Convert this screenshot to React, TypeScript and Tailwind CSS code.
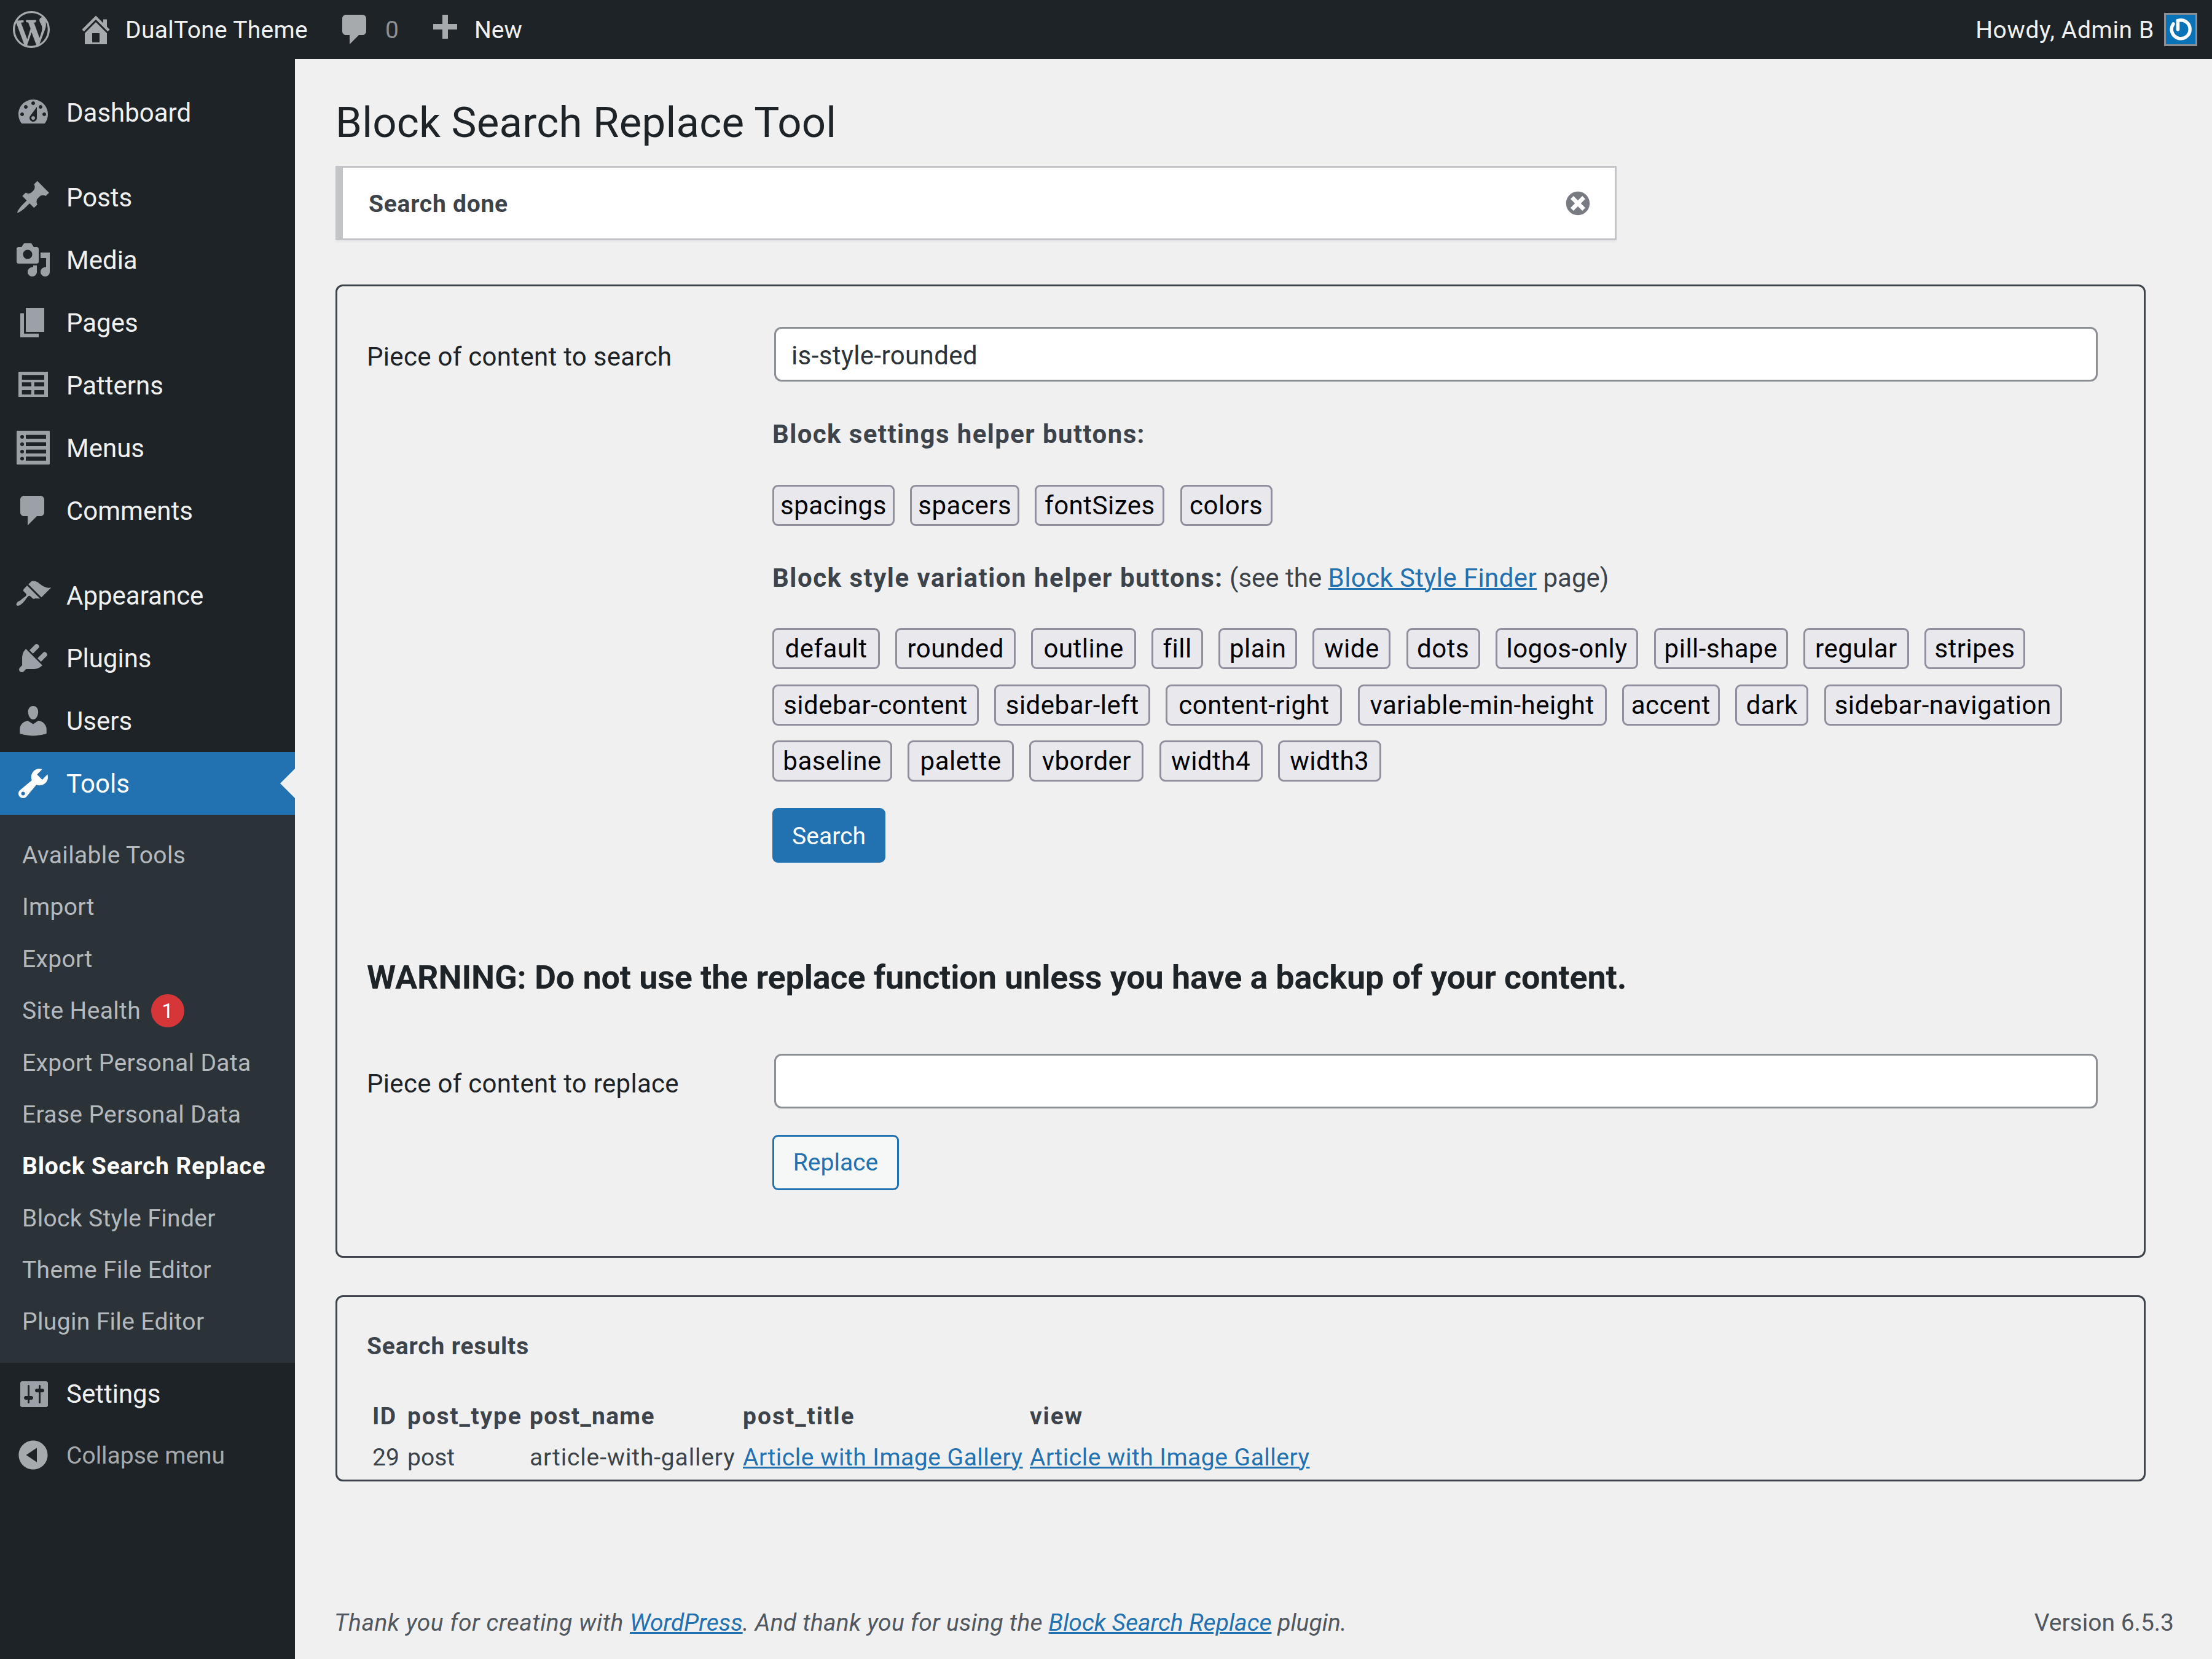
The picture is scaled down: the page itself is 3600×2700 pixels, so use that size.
import React from "react";

const ICONS: Record<string, string> = {
  wp: "M20 10c0-5.51-4.49-10-10-10C4.48 0 0 4.49 0 10c0 5.52 4.48 10 10 10 5.51 0 10-4.48 10-10zM7.78 15.37L4.37 6.22c.55-.02 1.17-.08 1.17-.08.5-.06.44-1.13-.06-1.11 0 0-1.45.11-2.37.11-.18 0-.37 0-.58-.01C4.12 2.69 6.87 1.11 10 1.11c2.33 0 4.45.87 6.05 2.34-.68-.11-1.65.39-1.65 1.58 0 .74.45 1.36.9 2.1.35.61.55 1.36.55 2.46 0 1.49-1.4 5-1.4 5l-3.03-8.37c.54-.02.82-.17.82-.17.5-.05.44-1.25-.06-1.22 0 0-1.44.12-2.38.12-.87 0-2.33-.12-2.33-.12-.5-.03-.56 1.2-.06 1.22l.92.08 1.26 3.41zM17.41 10c.24-.64.74-1.87.43-4.25.7 1.29 1.05 2.71 1.05 4.25 0 3.29-1.73 6.24-4.4 7.78.97-2.59 1.94-5.2 2.92-7.78zM6.1 18.09C3.12 16.65 1.11 13.53 1.11 10c0-1.3.23-2.48.72-3.59C3.25 10.3 4.67 14.2 6.1 18.09zm4.03-6.63l2.58 6.98c-.86.29-1.76.45-2.71.45-.79 0-1.57-.11-2.29-.33.81-2.38 1.62-4.74 2.42-7.1z",
  home: "M16 8.5l1.53 1.53-1.06 1.06L10 4.62l-6.47 6.47-1.06-1.06L10 2.5l4 4v-2h2v4zm-6-2.46l6 5.99V18H4v-5.97zM12 17v-5H8v5h4z",
  comment: "M5 2h9c1.1 0 2 .9 2 2v7c0 1.1-.9 2-2 2h-2l-5 5v-5H5c-1.1 0-2-.9-2-2V4c0-1.1.9-2 2-2z",
  plus: "M17 7v3h-5v5H9v-5H4V7h5V2h3v5h5z",
  dashboard: "M3.76 16h12.48c1.1-1.37 1.76-3.11 1.76-5 0-4.42-3.58-8-8-8s-8 3.58-8 8c0 1.89.66 3.63 1.76 5zM10 4c.55 0 1 .45 1 1s-.45 1-1 1-1-.45-1-1 .45-1 1-1zM6 6c.55 0 1 .45 1 1s-.45 1-1 1-1-.45-1-1 .45-1 1-1zm8 0c.55 0 1 .45 1 1s-.45 1-1 1-1-.45-1-1 .45-1 1-1zm-5.37 5.55L12 7v6c0 1.1-.9 2-2 2s-2-.9-2-2c0-.57.24-1.08.63-1.45zM4 10c.55 0 1 .45 1 1s-.45 1-1 1-1-.45-1-1 .45-1 1-1zm12 0c.55 0 1 .45 1 1s-.45 1-1 1-1-.45-1-1 .45-1 1-1zm-5 3c0-.55-.45-1-1-1s-1 .45-1 1 .45 1 1 1 1-.45 1-1z",
  post: "M10.44 3.02l1.82-1.82 6.36 6.35-1.83 1.82c-1.05-.68-2.48-.57-3.41.36l-.75.75c-.92.93-1.04 2.35-.35 3.41l-1.83 1.82-2.41-2.41-2.8 2.79c-.42.42-3.38 2.71-3.8 2.29s1.86-3.39 2.28-3.81l2.79-2.79L4.1 9.36l1.83-1.82c1.05.69 2.48.57 3.4-.36l.75-.75c.93-.92 1.05-2.35.36-3.41z",
  media: "M13 11V4c0-.55-.45-1-1-1h-1.67L9 1H5L3.67 3H2c-.55 0-1 .45-1 1v7c0 .55.45 1 1 1h10c.55 0 1-.45 1-1zM7 4.5c1.38 0 2.5 1.12 2.5 2.5S8.38 9.5 7 9.5 4.5 8.38 4.5 7 5.62 4.5 7 4.5zM14 6h5v10.5c0 1.38-1.12 2.5-2.5 2.5S14 17.88 14 16.5s1.12-2.5 2.5-2.5c.17 0 .34.02.5.05V9h-3V6zm-4 8.05V13h2v3.5c0 1.38-1.12 2.5-2.5 2.5S7 17.88 7 16.5 8.12 14 9.5 14c.17 0 .34.02.5.05z",
  page: "M6 15V2h10v13H6zm-1 1h8v2H3V5h2v11z",
  patterns: "M2 2.7h16v13.6H2zM3.9 4.4V7H16V4.4zM3.9 8.4v2.2H9V8.4zM10.6 8.4v2.2H16V8.4zM3.9 12.7V15H9v-2.3zM10.6 12.7V15H16v-2.3z",
  menus: "M1.5.7h17c.3 0 .5.2.5.5v17.3c0 .3-.2.5-.5.5h-17c-.3 0-.5-.2-.5-.5V1.200c0-.3.2-.5.5-.5zM6 2.900V5h11V2.900zM6 6.900V9h11V6.900zM6 10.900V13h11v-2.100zM6 14.700v2.200h11v-2.200zM4 3a1 1 0 1 0 0 2 1 1 0 0 0 0-2zM4 7a1 1 0 1 0 0 2 1 1 0 0 0 0-2zM4 11a1 1 0 1 0 0 2 1 1 0 0 0 0-2zM4 14.800a1 1 0 1 0 0 2 1 1 0 0 0 0-2z",
  appearance: "M14.48 11.06L7.41 3.99l1.5-1.5c.5-.56 2.3-.47 3.51.32 1.21.8 1.43 1.28 2.91 2.1 1.18.64 2.45 1.26 4.45.85zm-.71.71L6.7 4.7 4.93 6.47c-.39.39-.39 1.02 0 1.41l1.06 1.06c.39.39.39 1.03 0 1.42-.6.6-1.43 1.11-2.21 1.69-.35.26-.7.53-1.01.84C1.43 13.23.4 14.75 1.1 15.45c.7.7 2.22-.33 3.56-1.68.31-.31.58-.66.84-1.01.58-.78 1.09-1.61 1.69-2.21.39-.39 1.02-.39 1.41 0l1.06 1.06c.39.39 1.02.39 1.41 0z",
  plugins: "M13.11 4.36L9.87 7.6 8 5.73l3.24-3.24c.35-.34 1.05-.2 1.56.32.52.51.66 1.21.31 1.55zm-8 1.77l.91-1.12 9.01 9.01-1.19.84c-.71.71-2.63 1.16-3.82 1.16H6.14L4.9 17.26c-.59.59-1.54.59-2.12 0-.59-.58-.59-1.53 0-2.12l1.24-1.24v-3.88c0-1.13.4-3.19 1.09-3.89zm7.26 3.97l3.24-3.24c.34-.35 1.04-.21 1.55.31.52.51.66 1.21.31 1.55l-3.24 3.25z",
  users: "M10 9.25c-2.27 0-2.73-3.44-2.73-3.44C7 4.02 7.82 2 9.97 2c2.16 0 2.98 2.02 2.71 3.81 0 0-.41 3.44-2.68 3.44zm0 2.57L12.72 10c2.39 0 4.52 2.33 4.52 4.53v2.49s-3.65 1.13-7.24 1.13c-3.65 0-7.24-1.13-7.24-1.13v-2.49c0-2.25 1.94-4.48 4.47-4.48z",
  tools: "M16.68 9.77c-1.34 1.34-3.3 1.67-4.95.99l-5.41 6.52c-.99.99-2.59.99-3.58 0s-.99-2.59 0-3.57l6.52-5.42c-.68-1.65-.35-3.61.99-4.95 1.28-1.28 3.12-1.62 4.72-1.06l-2.89 2.89 2.82 2.82 2.86-2.87c.53 1.58.18 3.39-1.08 4.65zM3.81 16.21c.4.39 1.04.39 1.43 0 .4-.4.4-1.04 0-1.43-.39-.4-1.03-.4-1.43 0-.39.39-.39 1.03 0 1.43z",
  settings: "M18 16V4c0-.55-.45-1-1-1H4c-.55 0-1 .45-1 1v12c0 .55.45 1 1 1h13c.55 0 1-.45 1-1zM8 11h1c.55 0 1 .45 1 1s-.45 1-1 1H8v1.500c0 .28-.22.5-.5.5s-.5-.22-.5-.5V13H6c-.55 0-1-.45-1-1s.45-1 1-1h1V5.500c0-.28.22-.5.5-.5s.5.22.5.5V11zm5-2h-1c-.55 0-1-.45-1-1s.45-1 1-1h1V5.500c0-.28.22-.5.5-.5s.5.22.5.5V7h1c.55 0 1 .45 1 1s-.45 1-1 1h-1v5.500c0 .28-.22.5-.5.5s-.5-.22-.5-.5V9z",
  collapse: "M10 2.160c4.330 0 7.840 3.510 7.840 7.840s-3.510 7.840-7.840 7.840S2.160 14.330 2.160 10 5.710 2.160 10 2.160zm2 11.720V6.120L6.180 9.970z",
  dismiss: "M10 2c4.420 0 8 3.580 8 8s-3.580 8-8 8-8-3.580-8-8 3.580-8 8-8zm5 11l-3-3 3-3-2-2-3 3-3-3-2 2 3 3-3 3 2 2 3-3 3 3z",
};

function Dashicon({ name, className }: { name: string; className?: string }) {
  return (
    <svg viewBox="0 0 20 20" className={`shrink-0 fill-current ${className ?? "size-[60px]"}`}>
      <path d={ICONS[name]} fillRule="evenodd" />
    </svg>
  );
}

function MenuItem({ icon, label, active }: { icon: string; label: string; active?: boolean }) {
  return (
    <a className={`relative flex h-[102px] items-center pl-[24px] text-[42px] ${active ? "bg-[#2271b1] text-white" : "text-[#f0f0f1]"}`}>
      <Dashicon name={icon} className={`size-[60px] ${active ? "text-white" : "text-[#9ca1a7]"}`} />
      <span className="ml-[24px]">{label}</span>
      {active && (
        <span className="absolute right-0 top-[27px] border-y-[24px] border-r-[24px] border-y-transparent border-r-[#f0f0f1]" />
      )}
    </a>
  );
}

const subItems = [
  "Available Tools",
  "Import",
  "Export",
  "Site Health",
  "Export Personal Data",
  "Erase Personal Data",
  "Block Search Replace",
  "Block Style Finder",
  "Theme File Editor",
  "Plugin File Editor",
];

function Sidebar() {
  return (
    <aside className="w-[480px] shrink-0 bg-[#1d2327] pt-[36px]">
      <MenuItem icon="dashboard" label="Dashboard" />
      <div className="h-[36px]" />
      <MenuItem icon="post" label="Posts" />
      <MenuItem icon="media" label="Media" />
      <MenuItem icon="page" label="Pages" />
      <MenuItem icon="patterns" label="Patterns" />
      <MenuItem icon="menus" label="Menus" />
      <MenuItem icon="comment" label="Comments" />
      <div className="h-[36px]" />
      <MenuItem icon="appearance" label="Appearance" />
      <MenuItem icon="plugins" label="Plugins" />
      <MenuItem icon="users" label="Users" />
      <MenuItem icon="tools" label="Tools" active />
      <ul className="bg-[#2c3338] pb-[24px] pt-[24px] text-[39px]">
        {subItems.map((item) => (
          <li
            key={item}
            className={`flex h-[84.4px] items-center pl-[36px] ${item === "Block Search Replace" ? "font-bold tracking-[0.8px] text-white" : "tracking-[0.35px] text-[#b4b9be]"}`}
          >
            {item}
            {item === "Site Health" && (
              <span className="ml-[17px] flex size-[54px] items-center justify-center rounded-full bg-[#d63638] text-[33px] text-white">
                1
              </span>
            )}
          </li>
        ))}
      </ul>
      <MenuItem icon="settings" label="Settings" />
      <div className="flex h-[96px] items-center pl-[24px] text-[39px] text-[#a7aaad]">
        <Dashicon name="collapse" />
        <span className="ml-[24px] pt-[2px]">Collapse menu</span>
      </div>
    </aside>
  );
}

function AdminBar() {
  return (
    <header className="flex h-[96px] items-center justify-between bg-[#1d2327] pl-[21px] pr-[24px] text-[39px] text-[#f0f0f1]">
      <div className="flex items-center">
        <Dashicon name="wp" className="size-[60px] text-[#a7aaad]" />
        <Dashicon name="home" className="ml-[45px] size-[60px] text-[#a7aaad]" />
        <span className="ml-[18px] w-[344px] pt-[2px] tracking-[0.3px]">DualTone Theme</span>
        <Dashicon name="comment" className="size-[60px] text-[#a7aaad]" />
        <span className="ml-[19px] w-[66px] pt-[2px] text-[#8c8f94]">0</span>
        <Dashicon name="plus" className="size-[60px] text-[#a7aaad]" />
        <span className="ml-[19px] pt-[2px]">New</span>
      </div>
      <div className="flex items-center">
        <span className="pt-[2px] tracking-[0.65px]">Howdy, Admin B</span>
        <div className="ml-[16px] size-[54px] border-[3px] border-[#8c8f94] bg-[#0a73b7]">
          <svg viewBox="0 0 48 48" className="size-full fill-none stroke-white">
            <path d="M12 15A15 15 0 1 0 19.500 9.500V24" strokeWidth="5.500" strokeLinecap="round" />
          </svg>
        </div>
      </div>
    </header>
  );
}

const settingTags = [
  ["spacings", "w-[199px]"],
  ["spacers", "w-[178px]"],
  ["fontSizes", "w-[211px]"],
  ["colors", "w-[150px]"],
];

const styleTags = [
  ["default", "w-[175px]"],
  ["rounded", "w-[196px]"],
  ["outline", "w-[170.500px]"],
  ["fill", "w-[84px]"],
  ["plain", "w-[128px]"],
  ["wide", "w-[127px]"],
  ["dots", "w-[120px]"],
  ["logos-only", "w-[232.500px]"],
  ["pill-shape", "w-[218.500px]"],
  ["regular", "w-[171.500px]"],
  ["stripes", "w-[164px]"],
  ["sidebar-content", "w-[336px]"],
  ["sidebar-left", "w-[254px]"],
  ["content-right", "w-[287px]"],
  ["variable-min-height", "w-[405px]"],
  ["accent", "w-[159px]"],
  ["dark", "w-[119.500px]"],
  ["sidebar-navigation", "w-[387px]"],
  ["baseline", "w-[195px]"],
  ["palette", "w-[173px]"],
  ["vborder", "w-[186px]"],
  ["width4", "w-[168px]"],
  ["width3", "w-[168px]"],
];

function Tags({ items }: { items: string[][] }) {
  return (
    <div className="flex flex-wrap gap-x-[25.200px] gap-y-[24.500px]">
      {items.map(([label, width]) => (
        <button
          key={label}
          className={`h-[67px] rounded-[9px] border-[3px] border-[#8f8f9d] bg-[#e9e9ed] text-center text-[42px] leading-[55px] tracking-[0.5px] text-black ${width}`}
        >
          {label}
        </button>
      ))}
    </div>
  );
}

function FieldRow({ label, value }: { label: string; value?: string }) {
  return (
    <div className="flex">
      <div className="w-[660px] pt-[19px] text-[42px] leading-[60px] tracking-[0.3px] text-[#1d2327]">{label}</div>
      <div className="ml-[3px] flex h-[89px] w-[2154px] items-center rounded-[12px] border-[3px] border-[#8c8f94] bg-white pl-[25px] pt-[3px] text-[42px] tracking-[0.4px] text-[#2c3338]">
        {value}
      </div>
    </div>
  );
}

function Link({ children, tracking }: { children: React.ReactNode; tracking?: string }) {
  return <a className={`text-[#2271b1] underline decoration-[3px] ${tracking ?? ""}`}>{children}</a>;
}

export default function App() {
  return (
    <div className="flex min-h-screen flex-col bg-[#f0f0f1] [font-family:Roboto,sans-serif]">
      <AdminBar />
      <div className="flex flex-1">
        <Sidebar />
        <main className="flex flex-1 flex-col pl-[66px]">
          <h1 className="mt-[60px] text-[69px] leading-[87px] tracking-[0.2px] text-[#1d2327]">Block Search Replace Tool</h1>
          <div className="mt-[27px] flex h-[121px] w-[2085px] items-center justify-between border-[3px] border-l-[12px] border-[#c3c4c7] bg-white pl-[42px] pr-[36px] shadow-[0_3px_3px_rgba(0,0,0,0.04)]">
            <strong className="pt-[3px] text-[39px] font-bold tracking-[0.75px] text-[#3c434a]">Search done</strong>
            <Dashicon name="dismiss" className="size-[48px] text-[#787c82]" />
          </div>

          <section className="mt-[72px] w-[2946px] rounded-[12px] border-[3px] border-[#3c434a] pb-[107px] pl-[48px] pr-[72px] pt-[66px]">
            <FieldRow label="Piece of content to search" value="is-style-rounded" />
            <div className="ml-[660px]">
              <p className="mt-[56px] text-[42px] font-bold leading-[60px] tracking-[1.4px] text-[#3c434a]">Block settings helper buttons:</p>
              <div className="mt-[52px]">
                <Tags items={settingTags} />
              </div>
              <p className="mt-[55px] text-[42px] leading-[60px] text-[#3c434a]">
                <strong className="font-bold tracking-[1.5px]">Block style variation helper buttons:</strong> (see the{" "}
                <Link tracking="tracking-[0.4px]">Block Style Finder</Link> page)
              </p>
              <div className="mt-[51px]">
                <Tags items={styleTags} />
              </div>
              <button className="mt-[43px] h-[89px] w-[184px] rounded-[9px] bg-[#2271b1] pt-[3px] text-center text-[39px] text-white">
                Search
              </button>
            </div>
            <h2 className="mt-[151px] text-[54px] font-bold leading-[72px] tracking-[-0.17px] text-[#1d2327]">
              WARNING: Do not use the replace function unless you have a backup of your content.
            </h2>
            <div className="mt-[88px]">
              <FieldRow label="Piece of content to replace" />
            </div>
            <button className="ml-[660px] mt-[43px] h-[90px] w-[206px] rounded-[9px] border-[3px] border-[#2271b1] bg-[#f6f7f7] text-center text-[39px] text-[#2271b1]">
              Replace
            </button>
          </section>

          <section className="mt-[61px] h-[303px] w-[2946px] rounded-[12px] border-[3px] border-[#3c434a] pl-[48px] pt-[50px] text-[#3c434a]">
            <p className="text-[39px] font-bold leading-[60px] tracking-[0.85px]">Search results</p>
            <table className="mt-[51px] table-fixed border-collapse text-left text-[39px]">
              <thead>
                <tr className="h-[67px]">
                  <th className="w-[57px] pl-[9px] font-bold tracking-[1.3px]">ID</th>
                  <th className="w-[199px] pl-[9px] font-bold tracking-[1.8px]">post_type</th>
                  <th className="w-[347px] pl-[9px] font-bold tracking-[1.3px]">post_name</th>
                  <th className="w-[467px] pl-[9px] font-bold tracking-[2px]">post_title</th>
                  <th className="pl-[9px] font-bold tracking-[1.8px]">view</th>
                </tr>
              </thead>
              <tbody>
                <tr className="h-[66px]">
                  <td className="pl-[9px]">29</td>
                  <td className="pl-[9px]">post</td>
                  <td className="pl-[9px] tracking-[0.85px]">article-with-gallery</td>
                  <td className="pl-[9px]"><Link tracking="tracking-[0.5px]">Article with Image Gallery</Link></td>
                  <td className="pl-[9px]"><Link tracking="tracking-[0.5px]">Article with Image Gallery</Link></td>
                </tr>
              </tbody>
            </table>
          </section>

          <footer className="-ml-[2px] mt-auto flex items-center justify-between pb-[29px] pr-[62px] text-[39px] leading-[60px] text-[#50575e]">
            <p className="italic">
              <span className="tracking-[0.5px]">Thank you for creating with </span>
              <Link>WordPress</Link>
              <span className="tracking-[0.25px]">. And thank you for using the </span>
              <Link>Block Search Replace</Link> plugin.
            </p>
            <p>Version 6.5.3</p>
          </footer>
        </main>
      </div>
    </div>
  );
}
